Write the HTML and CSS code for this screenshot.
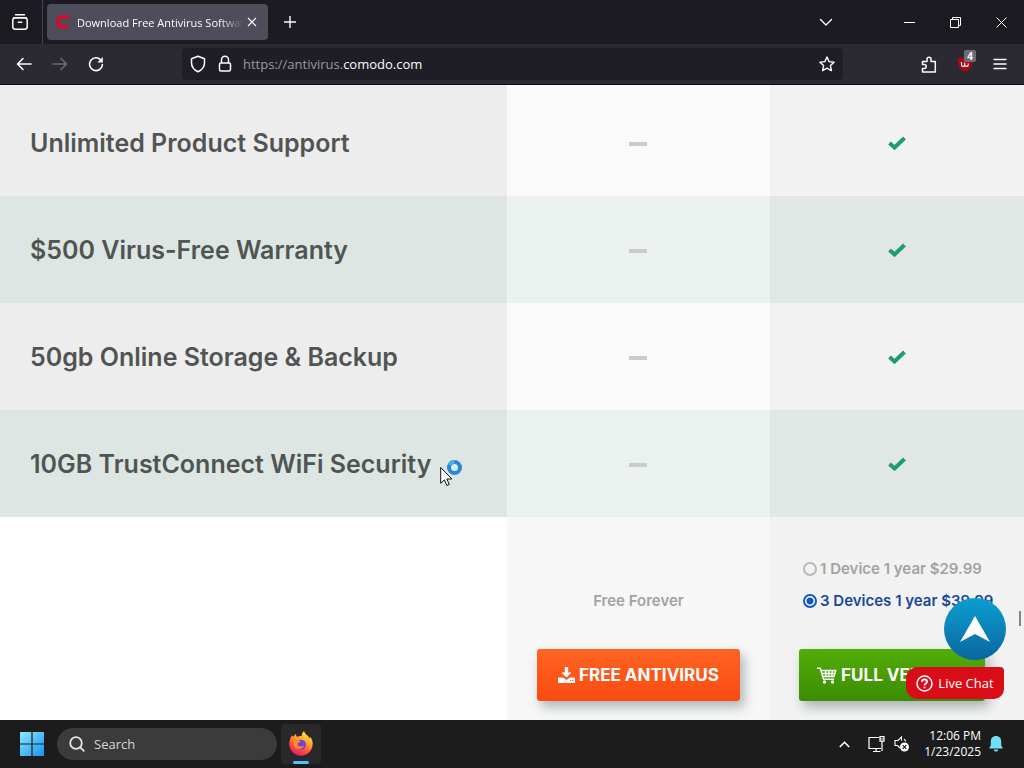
FILE: index.html
```html
<!DOCTYPE html>
<html lang="en">
<head>
    <meta charset="UTF-8">
    <meta name="viewport" content="width=device-width, initial-scale=1.0">
    <title>Download Free Antivirus Software</title>
    <link rel="stylesheet" href="styles.css">
</head>
<body>
    <header class="browser">
        <div class="tabbar">
            <button class="icon-btn view-btn" aria-label="Firefox View">
                <svg width="18" height="18" viewBox="0 0 18 18" fill="none" stroke="#fbfbfe" stroke-width="1.5" stroke-linecap="round"><path d="M4.5 1.8h9"/><rect x="1.8" y="4.8" width="14.4" height="11.4" rx="2.4"/><path d="M3 4.8h12M7.3 9.2h3.4"/></svg>
            </button>
            <div class="tab">
                <svg width="16" height="16" viewBox="0 0 16 16"><path d="M15.5 1l-1 4H8.500C6 5 5.200 6 5.200 8s.8 3 3 3h5.300l-1 4H7C3 15 .8 12.400.8 8.200.8 3.800 3.400 1 7.600 1z" fill="#c4122f"/></svg>
                <span class="tab-title">Download Free Antivirus Software</span>
                <button class="tab-close" aria-label="Close tab">
                    <svg width="10" height="10" viewBox="0 0 10 10" stroke="#fbfbfe" stroke-width="1.2"><path d="M1 1l8 8M9 1L1 9"/></svg>
                </button>
            </div>
            <button class="icon-btn new-tab" aria-label="New tab">
                <svg width="14" height="14" viewBox="0 0 14 14" stroke="#fbfbfe" stroke-width="1.4"><path d="M7 1v12M1 7h12"/></svg>
            </button>
            <button class="icon-btn list-tabs" aria-label="List all tabs">
                <svg width="14" height="14" viewBox="0 0 14 14" fill="none" stroke="#fbfbfe" stroke-width="1.4" stroke-linecap="round"><path d="M1.500 4.500L7 10l5.500-5.500"/></svg>
            </button>
            <div class="window-btns">
                <button aria-label="Minimize"><svg width="11" height="11" viewBox="0 0 11 11" stroke="#fff"><path d="M0 5.500h11"/></svg></button>
                <button aria-label="Restore"><svg width="11" height="11" viewBox="0 0 11 11" fill="none" stroke="#fff"><path d="M.5 2.500h8v8h-8zM2.500 2.500v-2h8v8h-2"/></svg></button>
                <button aria-label="Close"><svg width="11" height="11" viewBox="0 0 11 11" stroke="#fff"><path d="M.5.5l10 10M10.500.5l-10 10"/></svg></button>
            </div>
        </div>
        <div class="toolbar">
            <div class="nav-btns">
                <button class="icon-btn" aria-label="Back"><svg width="16" height="16" viewBox="0 0 16 16" fill="none" stroke="#fbfbfe" stroke-width="1.600" stroke-linecap="round" stroke-linejoin="round"><path d="M15 8H1.500M7 2.500L1.500 8 7 13.500"/></svg></button>
                <button class="icon-btn" aria-label="Forward" disabled><svg width="16" height="16" viewBox="0 0 16 16" fill="none" stroke="#6b6a72" stroke-width="1.600" stroke-linecap="round" stroke-linejoin="round"><path d="M1 8h13.500M9 2.500L14.500 8 9 13.500"/></svg></button>
                <button class="icon-btn" aria-label="Reload"><svg width="16" height="16" viewBox="0 0 16 16" fill="none" stroke="#fbfbfe" stroke-width="1.600" stroke-linecap="round"><path d="M13.300 4.600A6.400 6.400 0 1 0 14.400 8.500"/><path d="M14.800 1v5.500H9.300z" fill="#fbfbfe" stroke="none"/></svg></button>
            </div>
            <div class="urlbar">
                <svg width="16" height="18" viewBox="0 0 16 18" fill="none" stroke="#fbfbfe" stroke-width="1.500" stroke-linejoin="round"><path d="M8 1.200l6.500 2.600v4c0 4-2.600 7.200-6.500 9-3.900-1.800-6.500-5-6.500-9v-4z"/></svg>
                <svg class="lock" width="14" height="18" viewBox="0 0 14 18" fill="none" stroke="#fbfbfe" stroke-width="1.500"><rect x="1.500" y="8" width="11" height="8" rx="1.500"/><path d="M3.500 8V4.800a3.500 3.500 0 0 1 7 0V8"/></svg>
                <span class="url">https://antivirus.<b>comodo.com</b></span>
                <button class="icon-btn" aria-label="Bookmark this page"><svg width="16" height="16" viewBox="0 0 16 16" fill="none" stroke="#fbfbfe" stroke-width="1.400" stroke-linejoin="round"><path d="M8 1l2.100 4.600 5 .6-3.700 3.400 1 5L8 12.100l-4.400 2.500 1-5L.9 6.200l5-.6z"/></svg></button>
            </div>
            <div class="tools">
                <button class="icon-btn" aria-label="Extensions"><svg width="16" height="17" viewBox="0 0 16 17" fill="none" stroke="#fbfbfe" stroke-width="1.500" stroke-linejoin="round"><path d="M1.500 5.500H6V3.300a2 2 0 0 1 4 0v2.200h4.300V16H1.500v-3.500h1.700a2 2 0 0 0 0-4H1.500z"/></svg></button>
                <button class="icon-btn shield" aria-label="Blocked items">
                    <svg width="16" height="16" viewBox="0 0 16 16"><path d="M8 0c2 1.500 4.500 2 7 2v5c0 4.500-2.500 7-7 9-4.500-2-7-4.500-7-9V2c2.500 0 5-.5 7-2z" fill="#a00b14"/><path d="M4.500 6v3c0 1.800 3.200 1.800 3.200 0V6.500M7.700 9c0 1.800 3.500 1.800 3.500 0V7.500" fill="none" stroke="#fff" stroke-width="1.100"/></svg>
                    <span class="badge">4</span>
                </button>
                <button class="icon-btn" aria-label="Menu"><svg width="14" height="12" viewBox="0 0 14 12" stroke="#fbfbfe" stroke-width="1.400" stroke-linecap="round"><path d="M1 1.500h12M1 6h12M1 10.500h12"/></svg></button>
            </div>
        </div>
    </header>

    <main>
        <table class="compare">
            <colgroup><col class="col-feature"><col class="col-free"><col class="col-full"></colgroup>
            <tbody>
                <tr>
                    <th scope="row">Unlimited Product Support</th>
                    <td class="free"><span class="dash"></span></td>
                    <td class="full"><svg class="check" viewBox="0 0 18 14"><path d="M1.500 7l5 4.500L16.500 2" fill="none" stroke="#1f9d6b" stroke-width="4"/></svg></td>
                </tr>
                <tr>
                    <th scope="row">$500 Virus-Free Warranty</th>
                    <td class="free"><span class="dash"></span></td>
                    <td class="full"><svg class="check" viewBox="0 0 18 14"><path d="M1.500 7l5 4.500L16.500 2" fill="none" stroke="#1f9d6b" stroke-width="4"/></svg></td>
                </tr>
                <tr>
                    <th scope="row">50gb Online Storage &amp; Backup</th>
                    <td class="free"><span class="dash"></span></td>
                    <td class="full"><svg class="check" viewBox="0 0 18 14"><path d="M1.500 7l5 4.500L16.500 2" fill="none" stroke="#1f9d6b" stroke-width="4"/></svg></td>
                </tr>
                <tr>
                    <th scope="row">10GB TrustConnect WiFi Security</th>
                    <td class="free"><span class="dash"></span></td>
                    <td class="full"><svg class="check" viewBox="0 0 18 14"><path d="M1.500 7l5 4.500L16.500 2" fill="none" stroke="#1f9d6b" stroke-width="4"/></svg></td>
                </tr>
            </tbody>
            <tfoot>
                <tr>
                    <td></td>
                    <td class="free">
                        <div class="plans free-plan"><span>Free Forever</span></div>
                        <a class="buy orange" href="#free">
                            <svg width="17" height="17" viewBox="0 0 17 17" fill="#fff"><path d="M6.800 0h3.400v5.500h3.300L8.500 10.500l-5-5h3.300z"/><path d="M0 10.500h5L8.500 13l3.500-2.500h5V16H0z"/><path d="M12 13.500h1.200M14.200 13.500h1.200" stroke="#ff5a1c"/></svg>
                            <span>FREE ANTIVIRUS</span>
                        </a>
                    </td>
                    <td class="full">
                        <div class="plans">
                            <label><input type="radio" name="plan"> 1 Device 1 year $29.99</label>
                            <label><input type="radio" name="plan" checked> 3 Devices 1 year $39.99</label>
                        </div>
                        <a class="buy green" href="#full">
                            <svg width="20" height="17" viewBox="0 0 20 17" fill="none" stroke="#fff" stroke-width="1.400"><path d="M0 1.200h3.300L6.500 12.300H17"/><path d="M4.200 3.500h14.600L17 9.500H6M5 6.500h13M8.500 3.500l.8 6M12 3.500v6M15.500 3.500l-.7 6"/><circle cx="7.500" cy="15" r="1"/><circle cx="15.500" cy="15" r="1"/></svg>
                            <span>FULL VERSION</span>
                        </a>
                    </td>
                </tr>
            </tfoot>
        </table>

        <a class="to-top" href="#top" aria-label="Back to top">
            <svg width="30" height="26" viewBox="0 0 30 26"><path d="M15 0l15 26-15-8L0 26z" fill="#fff"/></svg>
        </a>
        <button class="chat">
            <svg width="17" height="17" viewBox="0 0 17 17" fill="none" stroke="#fff" stroke-width="1.500"><circle cx="8.500" cy="8.500" r="7.500"/><path d="M6 6.700c0-3.200 5-3.200 5 0 0 1.900-2.500 1.700-2.500 3.700M8.500 11.700v1.500" stroke-width="1.800"/></svg>
            Live Chat
        </button>
        <span class="scroll-thumb"></span>
        <svg class="cursor" width="23" height="29" viewBox="0 0 23 29"><circle cx="14.500" cy="8.500" r="5.500" fill="#d8f0f8" stroke="#2f86d8" stroke-width="4"/><path d="M9.500 6a5.500 5.500 0 0 1 5-3" fill="none" stroke="#45b4e6" stroke-width="4"/><path d="M.7 8.500v15.800l3.700-3.400 2.400 5.600 2.500-1-2.400-5.500h5z" fill="#fff" stroke="#111"/></svg>
    </main>

    <footer class="taskbar">
        <button class="start" aria-label="Start">
            <svg width="24" height="24" viewBox="0 0 24 24"><defs><linearGradient id="win" x1="0" y1="0" x2="1" y2="1"><stop offset="0" stop-color="#8ce8ff"/><stop offset="1" stop-color="#1595f0"/></linearGradient></defs><path d="M0 0h11.400v11.400H0zM12.600 0H24v11.400H12.600zM0 12.600h11.400V24H0zM12.600 12.600H24V24H12.600z" fill="url(#win)"/></svg>
        </button>
        <label class="search">
            <svg width="16" height="16" viewBox="0 0 16 16" fill="none" stroke="#e6e6e6" stroke-width="1.800" stroke-linecap="round"><circle cx="7" cy="7" r="5.800"/><path d="M11.300 11.300l3.500 3.500"/></svg>
            <input type="text" placeholder="Search" aria-label="Search">
        </label>
        <button class="app" aria-label="Firefox">
            <svg width="24" height="25" viewBox="0 0 24 25"><defs><linearGradient id="fox" x1=".8" y1="0" x2=".3" y2="1"><stop offset="0" stop-color="#fff44f"/><stop offset=".35" stop-color="#ffb02e"/><stop offset=".65" stop-color="#ff5a36"/><stop offset="1" stop-color="#f0146a"/></linearGradient></defs><path d="M15 0c-1.500 1.500-2.500 3.300-2.300 5.200-1.700-.3-3 0-4.300.7C7.300 5.200 7 4.200 7.100 3 5.800 3.700 5 4.700 4.500 5.700c-.7 0-1.200-.6-1.500-1.400C1.500 6.500.3 9.500.3 13 .3 19.500 5.500 24.700 12 24.700S23.700 19.500 23.700 13c0-3-1-6-2.900-7.500.3 1 .4 1.700.3 2.300C19.600 4.500 16 3.500 15 0z" fill="url(#fox)"/><circle cx="12" cy="13.700" r="5" fill="#7a3fd0"/><path d="M4.500 9.500c2.500-1.500 5-1 7 .8-1 1.600-3 1.300-3 2.700 0 2.700 4 3.300 6.500 1.500-1 4-8 5.300-10.300 0z" fill="#ff8a2a"/></svg>
        </button>
        <div class="tray">
            <svg width="11" height="7" viewBox="0 0 11 7" fill="none" stroke="#fff" stroke-width="1.600"><path d="M.8 6L5.500 1.300 10.200 6"/></svg>
            <svg class="net" width="17" height="17" viewBox="0 0 17 17" fill="none" stroke="#fff" stroke-width="1.200"><path d="M11 1.500H1v11h12M5 15.500h7.500M8 12.500v3"/><path d="M12 .7h4v4.500h-4zM14 5.200V15M13.200 2.500v1M14.800 2.500v1"/></svg>
            <svg class="sound" width="16" height="16" viewBox="0 0 16 16" fill="none" stroke="#fff" stroke-width="1.100"><path d="M7.500 4.500V1L4 4.500H1v5h2.500L6 12M10 3c1 .8 1.500 1.500 1.600 2.500"/><circle cx="10.500" cy="11" r="4.500" fill="#fff" stroke="none"/><path d="M8.700 9.200l3.600 3.600M12.300 9.200l-3.600 3.600" stroke="#1c1c1c"/></svg>
            <div class="clock">12:06 PM<br>1/23/2025</div>
            <svg width="14" height="16" viewBox="0 0 14 16" fill="#6fe0f5"><path d="M7 0c3.200 0 5.200 2.300 5.200 5.300v4l1.800 3.200H0l1.800-3.200v-4C1.800 2.300 3.800 0 7 0zM4.800 13.500h4.400c-.3 2.800-4.100 2.800-4.400 0z"/></svg>
        </div>
    </footer>
</body>
</html>
```
FILE: styles.css
```css
* {
    box-sizing: border-box;
}
body {
    margin: 0;
    height: 100vh;
    display: flex;
    flex-direction: column;
    overflow: hidden;
    font-family: "Open Sans", "Noto Sans", sans-serif;
    background-color: #fff;
}
button {
    background: none;
    border: none;
    padding: 0;
    color: inherit;
    font: inherit;
}
svg {
    display: block;
    flex: none;
}

/* browser */
.browser {
    flex: none;
    color: #fbfbfe;
    background-color: #1c1b22;
    border-bottom: 1px solid #0c0c0d;
}
.tabbar {
    height: 44px;
    display: flex;
    align-items: center;
}
.icon-btn {
    display: flex;
    align-items: center;
    justify-content: center;
}
.view-btn {
    width: 43px;
    height: 44px;
    padding-right: 2px;
    border-right: 1px solid #45444d;
}
.tab {
    width: 221px;
    height: 36px;
    margin-left: 4px;
    padding: 0 11px 0 8px;
    display: flex;
    align-items: center;
    background-color: #4e4d5a;
    border-radius: 4px;
}
.tab-title {
    flex: 1;
    margin-left: 6px;
    overflow: hidden;
    white-space: nowrap;
    font-size: 11px;
    -webkit-mask-image: linear-gradient(to left, transparent, #000 24px);
    mask-image: linear-gradient(to left, transparent, #000 24px);
}
.tab-close {
    margin-left: 4px;
}
.new-tab {
    width: 44px;
    height: 44px;
}
.list-tabs {
    width: 40px;
    height: 44px;
    margin-left: auto;
    margin-right: 40px;
}
.window-btns {
    display: flex;
}
.window-btns button {
    width: 46px;
    height: 44px;
    display: flex;
    align-items: center;
    justify-content: center;
}
.toolbar {
    height: 40px;
    display: flex;
    align-items: center;
    background-color: #2b2a33;
}
.nav-btns {
    display: flex;
    gap: 20px;
    padding-left: 16px;
}
.urlbar {
    flex: 1;
    height: 32px;
    margin: 0 78px;
    padding: 0 8px;
    display: flex;
    align-items: center;
    background-color: #1f1e26;
    border-radius: 4px;
}
.lock {
    margin-left: 12px;
}
.url {
    flex: 1;
    margin-left: 11px;
    font-size: 13px;
    color: #9a99a2;
}
.url b {
    font-weight: 400;
    color: #fbfbfe;
}
.tools {
    display: flex;
    gap: 20px;
    padding-right: 17px;
}
.shield {
    position: relative;
}
.badge {
    position: absolute;
    top: -6px;
    right: -3px;
    padding: 0 3px;
    font-size: 10px;
    font-weight: 700;
    line-height: 12px;
    background-color: #6d6d72;
    border-radius: 2px;
}

/* comparison table */
main {
    flex: 1;
    position: relative;
    overflow: hidden;
    font-family: Inter, sans-serif;
}
.compare {
    width: 100%;
    border-collapse: collapse;
    table-layout: fixed;
}
.col-feature {
    width: 49.5%;
}
.col-free {
    width: 25.7%;
}
.compare th,
.compare td {
    height: 107px;
    padding: 0;
    text-align: center;
}
.compare tbody tr:first-child > * {
    height: 111px;
    padding-top: 4px;
}
.compare th {
    padding-left: 30px;
    text-align: left;
    font-size: 25px;
    font-weight: 600;
    color: #505554;
    background-color: #ededed;
}
.free {
    background-color: #fafafa;
}
.full {
    background-color: #f2f2f2;
}
tbody tr:nth-child(even) th {
    background-color: #dee6e3;
}
tbody tr:nth-child(even) .free {
    background-color: #eaf1ee;
}
tbody tr:nth-child(even) .full {
    background-color: #e0e7e4;
}
.dash {
    display: block;
    width: 18px;
    height: 4px;
    margin: 2px auto 0;
    background-color: #c9cccb;
}
.check {
    width: 18px;
    height: 14px;
    margin: 0 auto;
}
.compare tfoot td {
    height: 203px;
    vertical-align: top;
    padding: 36px 29px 0;
}
.compare tfoot .free {
    padding: 36px 30px 0;
    background-color: #f7f7f7;
}
.plans {
    height: 64px;
    margin-bottom: 32px;
    display: flex;
    flex-direction: column;
    justify-content: flex-end;
    font-size: 15px;
    font-weight: 600;
    line-height: 32px;
    color: #a3a3a3;
}
.plans label {
    display: flex;
    align-items: center;
    gap: 3px;
    margin-left: 4px;
    white-space: nowrap;
}
.plans label:has(:checked) {
    color: #174a98;
}
.plans input {
    appearance: none;
    flex: none;
    width: 14px;
    height: 14px;
    margin: 0;
    border: 2px solid #b9b9b9;
    border-radius: 50%;
}
.plans input:checked {
    border-color: #1558c0;
    background: radial-gradient(circle, #1558c0 3px, #fff 4px);
}
.buy {
    height: 52px;
    display: flex;
    align-items: center;
    justify-content: center;
    gap: 4px;
    color: #fff;
    font-size: 17px;
    font-weight: 700;
    text-decoration: none;
    white-space: nowrap;
    border-radius: 3px;
    box-shadow: 4px 6px 12px rgba(60, 80, 90, 0.4);
}
.orange {
    background: linear-gradient(#ff6424, #fb4a10);
}
.green {
    margin-right: 10px;
    padding-right: 4px;
    background: linear-gradient(#52ad08, #3c8c04);
}

/* floating items over the page */
.to-top {
    position: absolute;
    right: 18px;
    bottom: 60px;
    width: 62px;
    height: 62px;
    display: flex;
    align-items: center;
    justify-content: center;
    border-radius: 50%;
    background: linear-gradient(#0b9fd0, #0a669f);
}
.chat {
    position: absolute;
    right: 20px;
    bottom: 21px;
    width: 98px;
    height: 32px;
    display: flex;
    align-items: center;
    justify-content: center;
    gap: 5px;
    color: #fff;
    font-family: "Open Sans", sans-serif;
    font-size: 13px;
    white-space: nowrap;
    background-color: #d80d18;
    border-radius: 12px 4px 10px 12px;
}
.scroll-thumb {
    position: absolute;
    right: 3px;
    top: 526px;
    width: 2px;
    height: 15px;
    background-color: #858585;
}
.cursor {
    position: absolute;
    left: 440px;
    top: 374px;
}

/* taskbar */
.taskbar {
    flex: none;
    height: 48px;
    display: flex;
    align-items: center;
    color: #fff;
    background-color: #1c1c1c;
}
.start {
    margin-left: 20px;
}
.search {
    width: 220px;
    height: 32px;
    margin-left: 13px;
    padding: 0 12px;
    display: flex;
    align-items: center;
    gap: 9px;
    background-color: #3b3b3b;
    border-radius: 16px;
}
.search input {
    flex: 1;
    min-width: 0;
    padding: 0;
    border: none;
    outline: none;
    background: none;
    color: #fff;
    font-family: inherit;
    font-size: 13px;
}
.search input::placeholder {
    color: #d6d6d6;
}
.app {
    width: 40px;
    height: 40px;
    margin-left: 4px;
    padding-top: 7px;
    display: flex;
    flex-direction: column;
    align-items: center;
    gap: 5px;
    background-color: #292929;
    border-radius: 4px;
}
.app::after {
    content: "";
    width: 16px;
    height: 3px;
    border-radius: 2px;
    background-color: #4cc2ff;
}
.tray {
    margin-left: auto;
    padding-right: 21px;
    display: flex;
    align-items: center;
}
.net {
    margin-left: 18px;
}
.sound {
    margin-left: 9px;
}
.clock {
    margin: 0 8px 0 14px;
    text-align: right;
    font-size: 12px;
    line-height: 16px;
}
```
